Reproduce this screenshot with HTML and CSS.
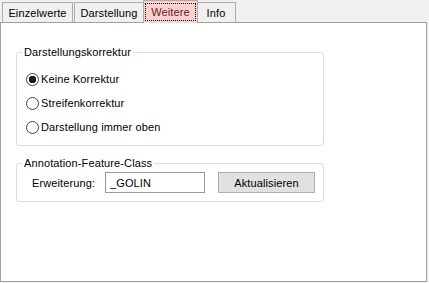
FILE: index.html
```html
<!DOCTYPE html>
<html lang="de">
<head>
    <meta charset="UTF-8">
    <meta name="viewport" content="width=device-width, initial-scale=1.0">
    <title>Weitere</title>
    <link rel="stylesheet" href="styles.css">
</head>
<body>
    <div class="tabs">
        <div class="tab tab-einzel">Einzelwerte</div>
        <div class="tab tab-darst">Darstellung</div>
        <div class="tab tab-active"><span class="focus">Weitere</span></div>
        <div class="tab tab-info">Info</div>
    </div>
    <div class="panel">
        <fieldset class="group group-korrektur">
            <legend>Darstellungskorrektur</legend>
            <label class="option"><input type="radio" name="korr" checked> Keine Korrektur</label>
            <label class="option"><input type="radio" name="korr"> Streifenkorrektur</label>
            <label class="option"><input type="radio" name="korr"> Darstellung immer oben</label>
        </fieldset>
        <fieldset class="group group-annotation">
            <legend>Annotation-Feature-Class</legend>
            <div class="field-row">
                <span class="field-label">Erweiterung:</span>
                <input class="textbox" type="text" value="_GOLIN">
                <button class="btn">Aktualisieren</button>
            </div>
        </fieldset>
    </div>
</body>
</html>
```

FILE: styles.css
```css
body {
    margin: 0;
    background-color: #f0f0f0;
    font-family: "Liberation Sans", Arial, sans-serif;
    font-size: 11px;
    letter-spacing: 0.12px;
    color: #000;
}

/* tab strip */
.tabs {
    display: flex;
    align-items: flex-end;
    height: 22px;
    padding-left: 2px;
}

.tab {
    box-sizing: border-box;
    height: 20px;
    padding-top: 4px;
    line-height: 13px;
    text-align: center;
    background-color: #f0f0f0;
    border: 1px solid #acacac;
    border-bottom: none;
}

.tab-einzel { width: 71px; }
.tab-darst { width: 70px; margin-left: 1px; }
.tab-info { width: 40px; }

.tab-active {
    position: relative;
    z-index: 1;
    width: 55px;
    height: 23px;
    margin: 0 -2px -1px -1px;
    padding: 2px 1px 0 1px;
    background-color: #ffd0d0;
    color: #5a1e1e;
}

.focus {
    display: block;
    height: 14px;
    padding-top: 2px;
    border: 1px dotted #000;
}

/* page */
.panel {
    box-sizing: border-box;
    width: 427px;
    height: 260px;
    padding: 23px 0 0 15px;
    background-color: #fff;
    border: 1px solid #a0a0a0;
}

.group {
    box-sizing: border-box;
    width: 308px;
    margin: 0;
    padding: 8px 0 6px 0;
    border: 1px solid #d5dfe5;
    border-radius: 3px;
    min-inline-size: 0;
}

.group legend {
    margin-left: 5px;
    padding: 0 2px;
    line-height: 13px;
}

.group-annotation {
    margin-top: 11px;
    padding: 2px 0 8px 0;
}

.option {
    display: flex;
    align-items: center;
    height: 24px;
    padding-left: 9px;
}

.option input {
    appearance: none;
    box-sizing: border-box;
    width: 13px;
    height: 13px;
    margin: 0 2px 0 0;
    border: 1px solid #444;
    border-radius: 50%;
    background-color: #fff;
}

.option input:checked {
    background: radial-gradient(circle, #1a1a1a 0 3.5px, #fff 4px);
}

.field-row {
    display: flex;
    align-items: center;
}

.field-label {
    width: 73px;
    padding-left: 15px;
}

.textbox {
    box-sizing: border-box;
    width: 100px;
    height: 21px;
    margin: 0;
    padding: 0 4px;
    font-family: inherit;
    font-size: 11px;
    letter-spacing: 0.12px;
    color: #000;
    border: 1px solid #999;
    background-color: #fff;
}

.btn {
    box-sizing: border-box;
    width: 97px;
    height: 21px;
    margin-left: 13px;
    padding: 0;
    font-family: inherit;
    font-size: 11px;
    letter-spacing: 0.12px;
    color: #000;
    background-color: #e1e1e1;
    border: 1px solid #adadad;
}
```
